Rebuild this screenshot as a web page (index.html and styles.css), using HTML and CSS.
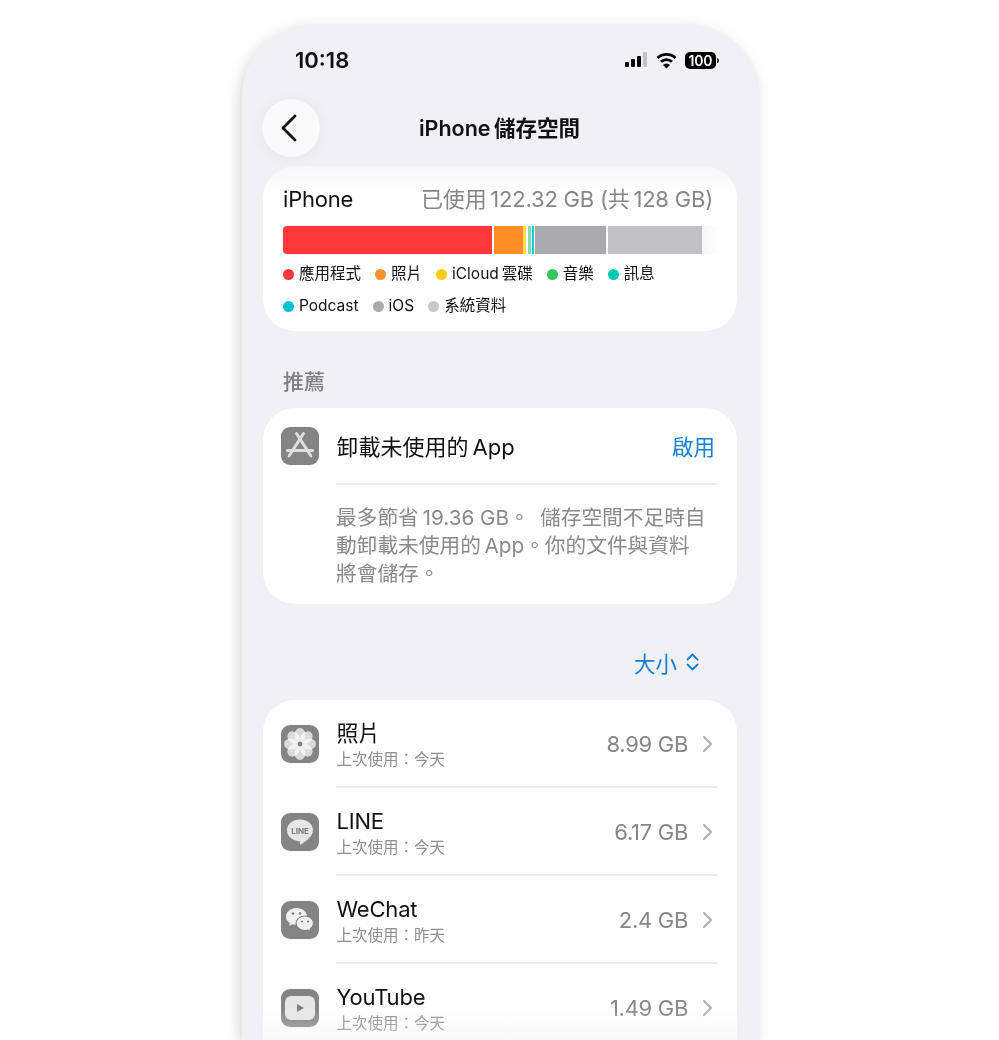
FILE: index.html
```html
<!DOCTYPE html>
<html lang="zh-Hant">
<head>
    <meta charset="UTF-8">
    <meta name="viewport" content="width=device-width, initial-scale=1.0">
    <title>iPhone儲存空間</title>
    <link rel="stylesheet" href="styles.css">
</head>
<body>
    <div class="phone">
        <div class="status-bar">
            <span class="time">10:18</span>
            <div class="status-icons">
                <svg class="signal" width="25" height="18" viewBox="0 0 25 18">
                    <rect x="1" y="11" width="4" height="5" rx="1" fill="#000"/>
                    <rect x="7" y="8" width="4" height="8" rx="1" fill="#000"/>
                    <rect x="13" y="5" width="4" height="11" rx="1" fill="#000"/>
                    <rect x="19" y="1" width="4" height="15" rx="1" fill="#c4c4c6"/>
                </svg>
                <svg class="wifi" width="21" height="17" viewBox="0 0 21 17">
                    <path d="M1.500 6a13 13 0 0 1 18 0" fill="none" stroke="#000" stroke-width="2.800"/>
                    <path d="M5 9.800a8 8 0 0 1 11 0" fill="none" stroke="#000" stroke-width="2.800"/>
                    <path d="M10.500 16.500 7 13a4.800 4.800 0 0 1 7 0z" fill="#000"/>
                </svg>
                <div class="battery"><span class="battery-level">100</span><span class="battery-cap"></span></div>
            </div>
        </div>

        <div class="nav">
            <button class="back-btn">
                <svg width="18" height="28" viewBox="0 0 18 28"><path d="M15 2 3 14l12 12" fill="none" stroke="#111" stroke-width="2.800" stroke-linecap="round" stroke-linejoin="round"/></svg>
            </button>
            <h1>iPhone&thinsp;儲存空間</h1>
        </div>

        <div class="card storage-card">
            <div class="storage-head">
                <span>iPhone</span>
                <span class="used">已使用&thinsp;122.32 GB (共&thinsp;128 GB)</span>
            </div>
            <div class="bar">
                <span class="seg seg-apps"></span>
                <span class="seg seg-photos"></span>
                <span class="seg seg-icloud"></span>
                <span class="seg seg-music"></span>
                <span class="seg seg-msg"></span>
                <span class="seg seg-podcast"></span>
                <span class="seg seg-ios"></span>
                <span class="seg seg-system"></span>
                <span class="seg seg-free"></span>
            </div>
            <div class="legend">
                <span class="legend-item"><i class="dot dot-apps"></i>應用程式</span>
                <span class="legend-item"><i class="dot dot-photos"></i>照片</span>
                <span class="legend-item"><i class="dot dot-icloud"></i>iCloud&thinsp;雲碟</span>
                <span class="legend-item"><i class="dot dot-music"></i>音樂</span>
                <span class="legend-item"><i class="dot dot-msg"></i>訊息</span>
                <span class="legend-item"><i class="dot dot-podcast"></i>Podcast</span>
                <span class="legend-item"><i class="dot dot-ios"></i>iOS</span>
                <span class="legend-item"><i class="dot dot-system"></i>系統資料</span>
            </div>
        </div>

        <h2 class="section-label">推薦</h2>

        <div class="card offload-card">
            <div class="offload-row">
                <div class="app-icon">
                    <svg width="38" height="38" viewBox="0 0 38 38">
                        <g stroke="#dedede" stroke-width="3" stroke-linecap="round" fill="none">
                            <path d="M15.500 6.500 30 29"/>
                            <path d="M22.500 6.500 8 29"/>
                            <path d="M6.500 23.500h25"/>
                        </g>
                    </svg>
                </div>
                <span class="offload-title">卸載未使用的&thinsp;App</span>
                <span class="enable">啟用</span>
            </div>
            <p class="offload-desc">最多節省&thinsp;19.36 GB。&ensp;儲存空間不足時自動卸載未使用的&thinsp;App。你的文件與資料將會儲存。</p>
        </div>

        <div class="sort">
            <span>大小</span>
            <svg width="13" height="18" viewBox="0 0 13 18"><path d="M1.500 6.500 6.500 1.500l5 5M1.500 11.500l5 5 5-5" fill="none" stroke="#0a7fd6" stroke-width="1.800" stroke-linecap="round" stroke-linejoin="round"/></svg>
        </div>

        <div class="card app-list">
            <div class="app-row">
                <div class="app-icon">
                    <svg width="38" height="38" viewBox="0 0 38 38">
                        <g fill="#fff" fill-opacity=".7">
                            <ellipse cx="19" cy="10" rx="5.500" ry="7"/>
                            <ellipse cx="19" cy="10" rx="5.500" ry="7" transform="rotate(45 19 19)"/>
                            <ellipse cx="19" cy="10" rx="5.500" ry="7" transform="rotate(90 19 19)"/>
                            <ellipse cx="19" cy="10" rx="5.500" ry="7" transform="rotate(135 19 19)"/>
                            <ellipse cx="19" cy="10" rx="5.500" ry="7" transform="rotate(180 19 19)"/>
                            <ellipse cx="19" cy="10" rx="5.500" ry="7" transform="rotate(225 19 19)"/>
                            <ellipse cx="19" cy="10" rx="5.500" ry="7" transform="rotate(270 19 19)"/>
                            <ellipse cx="19" cy="10" rx="5.500" ry="7" transform="rotate(315 19 19)"/>
                        </g>
                        <circle cx="19" cy="19" r="2.200" fill="#808080"/>
                    </svg>
                </div>
                <div class="app-info">
                    <div class="app-name">照片</div>
                    <div class="app-last">上次使用：今天</div>
                </div>
                <span class="app-size">8.99 GB</span>
                <svg class="chevron" width="12" height="18" viewBox="0 0 12 18"><path d="M2 2l7 7-7 7" fill="none" stroke="#b0b0b3" stroke-width="2.200" stroke-linecap="round" stroke-linejoin="round"/></svg>
            </div>
            <div class="app-row">
                <div class="app-icon">
                    <svg width="38" height="38" viewBox="0 0 38 38">
                        <path d="M19 6.500c7.400 0 13 4.700 13 10.800 0 5.300-6 10.300-12 14.200-.9.500-1.200-.2-1-1.300l.2-1.800C11.800 28.100 6 23.500 6 17.300 6 11.200 11.600 6.500 19 6.500z" fill="#e6e6e6"/>
                        <text class="line-text" x="19" y="20.500" text-anchor="middle">LINE</text>
                    </svg>
                </div>
                <div class="app-info">
                    <div class="app-name">LINE</div>
                    <div class="app-last">上次使用：今天</div>
                </div>
                <span class="app-size">6.17 GB</span>
                <svg class="chevron" width="12" height="18" viewBox="0 0 12 18"><path d="M2 2l7 7-7 7" fill="none" stroke="#b0b0b3" stroke-width="2.200" stroke-linecap="round" stroke-linejoin="round"/></svg>
            </div>
            <div class="app-row">
                <div class="app-icon">
                    <svg width="38" height="38" viewBox="0 0 38 38">
                        <path d="M15.500 7C9.700 7 5 10.800 5 15.500c0 2.700 1.500 5 3.900 6.600L8 25l3.300-1.700c1.300.4 2.700.6 4.200.6 5.800 0 10.500-3.800 10.500-8.400S21.300 7 15.500 7z" fill="#f0f0f0"/>
                        <path d="M24 15c-5 0-9 3.300-9 7.300s4 7.300 9 7.300c1.100 0 2.200-.2 3.200-.5l2.800 1.500-.8-2.500c2-1.300 3.300-3.500 3.300-5.800 0-4-4-7.300-8.500-7.300z" fill="#f0f0f0" stroke="#808080" stroke-width="1.200"/>
                        <g fill="#808080">
                            <circle cx="12" cy="12.500" r="1.300"/><circle cx="19" cy="12.500" r="1.300"/>
                            <circle cx="21" cy="20.500" r="1.100"/><circle cx="27" cy="20.500" r="1.100"/>
                        </g>
                    </svg>
                </div>
                <div class="app-info">
                    <div class="app-name">WeChat</div>
                    <div class="app-last">上次使用：昨天</div>
                </div>
                <span class="app-size">2.4 GB</span>
                <svg class="chevron" width="12" height="18" viewBox="0 0 12 18"><path d="M2 2l7 7-7 7" fill="none" stroke="#b0b0b3" stroke-width="2.200" stroke-linecap="round" stroke-linejoin="round"/></svg>
            </div>
            <div class="app-row">
                <div class="app-icon">
                    <svg width="38" height="38" viewBox="0 0 38 38">
                        <rect x="4" y="7" width="30" height="24" rx="6" fill="#e6e6e6"/>
                        <path d="M16 15v8l7-4z" fill="#7d7d7d"/>
                    </svg>
                </div>
                <div class="app-info">
                    <div class="app-name">YouTube</div>
                    <div class="app-last">上次使用：今天</div>
                </div>
                <span class="app-size">1.49 GB</span>
                <svg class="chevron" width="12" height="18" viewBox="0 0 12 18"><path d="M2 2l7 7-7 7" fill="none" stroke="#b0b0b3" stroke-width="2.200" stroke-linecap="round" stroke-linejoin="round"/></svg>
            </div>
        </div>
        <div class="bottom-fade"></div>
    </div>
</body>
</html>
```

FILE: styles.css
```css
* {
    margin: 0;
    padding: 0;
    box-sizing: border-box;
}

html, body {
    height: 1040px;
    overflow: hidden;
}

body {
    font-family: Inter, "Noto Sans CJK TC", sans-serif;
    background: #fff;
    color: #111;
    padding: 24px 0 0 242px;
    filter: drop-shadow(-3px 4px 7px rgba(0, 0, 0, 0.15));
}

.phone {
    position: relative;
    width: 518px;
    height: 1016px;
    padding: 0 23px 0 21px;
    overflow: hidden;
    background: #f0f0f5;
    border-radius: 72px 72px 0 0;
}

.status-bar {
    height: 75px;
    padding: 23px 18px 0 32px;
    display: flex;
    justify-content: space-between;
    align-items: flex-start;
}

.time {
    font-size: 22px;
    font-weight: 600;
    line-height: 26px;
}

.status-icons {
    display: flex;
    align-items: center;
    gap: 8px;
    height: 26px;
}

.signal {
    margin-right: -1px;
}

.battery {
    display: flex;
    align-items: center;
    gap: 1px;
}

.battery-level {
    width: 31px;
    height: 17px;
    background: #000;
    color: #fff;
    border-radius: 5px;
    font-size: 14px;
    font-weight: 600;
    line-height: 17px;
    text-align: center;
    letter-spacing: -0.2px;
}

.battery-cap {
    width: 2px;
    height: 5px;
    background: #333;
    border-radius: 0 2px 2px 0;
}

.nav {
    position: relative;
    height: 67px;
    margin-left: -1px;
}

.back-btn {
    width: 58px;
    height: 58px;
    border: none;
    border-radius: 50%;
    background: #fafafc;
    box-shadow: 0 2px 16px rgba(0, 0, 0, 0.05);
    display: flex;
    align-items: center;
    justify-content: center;
    padding-right: 4px;
}

.nav h1 {
    position: absolute;
    left: 0;
    right: 0;
    top: 13px;
    text-align: center;
    font-size: 21.5px;
    font-weight: 600;
    line-height: 32px;
}

.card {
    background: #fff;
    border-radius: 32px;
}

.storage-card {
    height: 165px;
    padding: 18px 0 0 20px;
    background: linear-gradient(#f7f7fa, #fff 26px);
}

.storage-head {
    display: flex;
    justify-content: space-between;
    padding-right: 24px;
    font-size: 22px;
    line-height: 30px;
    letter-spacing: -0.2px;
}

.used {
    color: #86868b;
}

.bar {
    display: flex;
    width: 437px;
    height: 28px;
    margin-top: 12px;
    border-radius: 4px 0 0 4px;
    overflow: hidden;
}

.seg {
    display: block;
    height: 100%;
}

.seg-apps { width: 209px; background: #ff383c; margin-right: 2px; }
.seg-photos { width: 29px; background: #ff8d28; }
.seg-icloud { width: 3px; background: #ffdb58; margin-right: 2px; }
.seg-music { width: 2px; background: #86dfa0; }
.seg-msg { width: 1px; background: #6fdcd0; margin-right: 1px; }
.seg-podcast { width: 2px; background: #22c5d8; margin-right: 1px; }
.seg-ios { width: 71px; background: #aaaaae; margin-right: 2px; }
.seg-system { width: 94px; background: #c2c2c6; }
.seg-free { flex: 1; background: linear-gradient(to right, #f6f6f7, #fff); }

.legend {
    display: flex;
    flex-wrap: wrap;
    width: 420px;
    margin-top: 4px;
    column-gap: 14px;
    font-size: 15.5px;
    line-height: 32px;
}

.legend-item {
    display: flex;
    align-items: center;
    gap: 5px;
    white-space: nowrap;
}

.dot {
    width: 11px;
    height: 11px;
    border-radius: 50%;
}

.dot-apps { background: #f4383c; }
.dot-photos { background: #f89230; }
.dot-icloud { background: #ffcc12; }
.dot-music { background: #34c759; }
.dot-msg { background: #00c8b3; }
.dot-podcast { background: #00c0d8; }
.dot-ios { background: #aaaaae; }
.dot-system { background: #c8c8cb; }

.section-label {
    margin: 35px 0 11px 20px;
    font-size: 21px;
    font-weight: 500;
    line-height: 31px;
    color: #808085;
}

.offload-card {
    height: 196px;
    padding: 19px 20px 0 17.5px;
}

.app-icon {
    flex: none;
    width: 38px;
    height: 38px;
    border-radius: 9px;
    background: #848484;
    overflow: hidden;
}

.app-icon svg {
    display: block;
}

.offload-row {
    display: flex;
    align-items: center;
    gap: 18px;
    height: 38px;
}

.offload-title {
    flex: 1;
    font-size: 22px;
    padding-bottom: 2px;
}

.enable {
    color: #0a7fd6;
    font-size: 21.5px;
    margin-right: 2px;
    padding-bottom: 2px;
}

.offload-desc {
    margin: 18px 0 0 55.5px;
    padding: 19px 7px 0 0;
    border-top: 2px solid #ebebee;
    font-size: 20.7px;
    line-height: 28px;
    color: #8a8a8e;
}

.sort {
    display: flex;
    justify-content: flex-end;
    align-items: center;
    gap: 9px;
    height: 96px;
    padding: 20px 38px 0 0;
    color: #0a7fd6;
    font-size: 21.5px;
}

.app-list {
    padding: 0 20px 0 17.5px;
    border-radius: 32px 32px 0 0;
}

.app-row {
    position: relative;
    display: flex;
    align-items: center;
    height: 88px;
    padding-bottom: 1px;
    gap: 18px;
}

.app-row::after {
    content: "";
    position: absolute;
    left: 55.5px;
    right: 0;
    bottom: 0;
    height: 2px;
    background: #ebebee;
}

.app-info {
    flex: 1;
    padding-top: 2px;
}

.app-name {
    font-size: 22px;
    line-height: 28px;
    letter-spacing: -0.2px;
}

.app-last {
    margin-top: 2px;
    font-size: 15.5px;
    line-height: 22px;
    color: #8e8e93;
}

.app-size {
    font-size: 22px;
    letter-spacing: -0.3px;
    color: #86868b;
}

.chevron {
    margin: 0 3px 0 -4px;
}

.line-text {
    font-family: Inter, sans-serif;
    font-size: 8px;
    font-weight: 700;
    fill: #7a7a7a;
}

.bottom-fade {
    position: absolute;
    left: 0;
    right: 0;
    bottom: 0;
    height: 34px;
    background: linear-gradient(rgba(240, 240, 245, 0), rgba(240, 240, 245, 0.4));
    pointer-events: none;
}
```
